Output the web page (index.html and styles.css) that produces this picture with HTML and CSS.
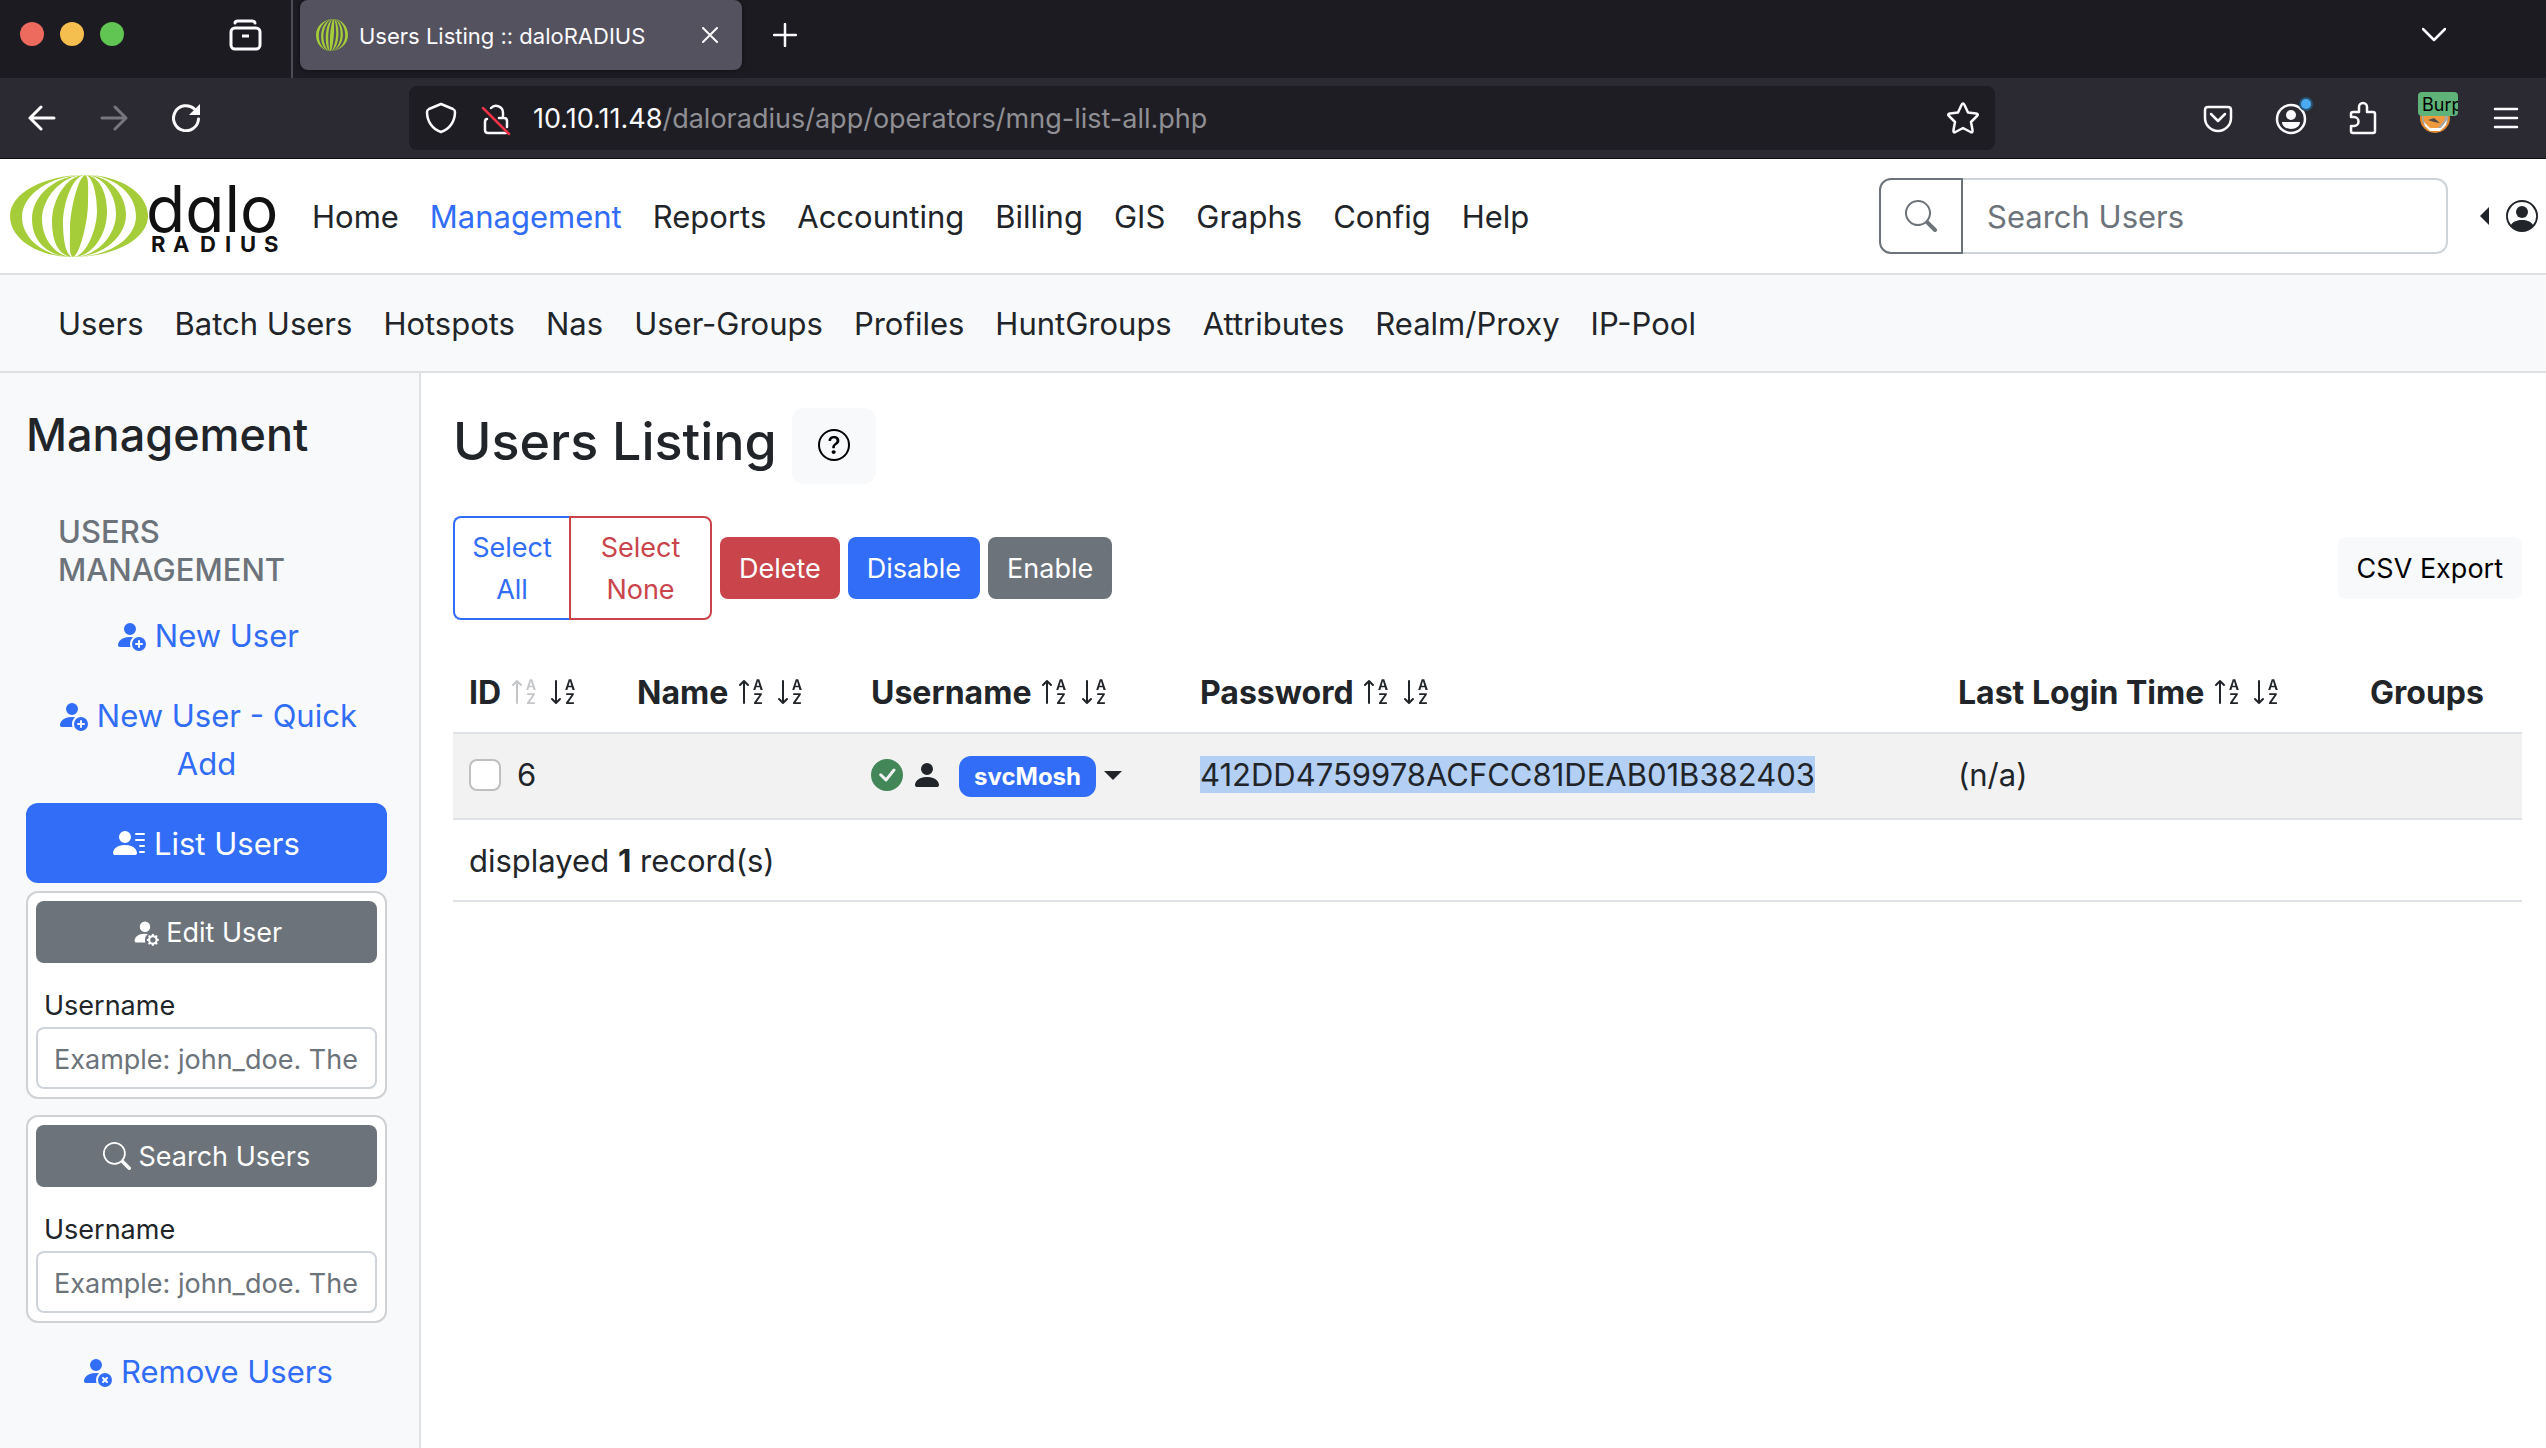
FILE: index.html
```html
<!DOCTYPE html>
<html lang="en">
<head>
<meta charset="utf-8">
<title>Users Listing :: daloRADIUS</title>
<link rel="stylesheet" href="styles.css">
</head>
<body>
<svg class="sprite" aria-hidden="true">
  <symbol id="globe" viewBox="0 0 138 82" preserveAspectRatio="none">
    <g fill="#a5cd39">
      <path d="M75 0C34 0 0 18 0 41S28 82 63 82C35 82 12 64 12 42S40 0 75 0z"/>
      <path d="M75 0C46 0 22 20 22 44S40 82 63 82C46 82 32 64 32 44S51 0 75 0z"/>
      <path d="M75 0C57 0 42 24 42 47S51 82 63 82C57 82 53 68 53 48S63 0 75 0z"/>
      <path d="M75 0C68 2 60 36 60 54S59 80 63 82C70 80 78 46 78 28S79 2 75 0z"/>
      <path d="M75 0C82 0 87 18 87 36S76 82 63 82C82 82 97 60 97 37S87 0 75 0z"/>
      <path d="M75 0C92 0 106 18 106 39S87 82 63 82C92 82 116 62 116 40S98 0 75 0z"/>
      <path d="M75 0C103 0 126 18 126 41S98 82 63 82C104 82 138 64 138 41S110 0 75 0z"/>
    </g>
  </symbol>
  <symbol id="sort-up" viewBox="0 0 16 16">
    <path fill-rule="evenodd" d="M10.082 5.629 9.664 7H8.598l1.789-5.332h1.234L13.402 7h-1.12l-.419-1.371zm1.57-.785L11 2.687h-.047l-.652 2.157z"/>
    <path d="M12.96 14H9.028v-.691l2.579-3.72v-.054H9.098v-.867h3.785v.691l-2.567 3.72v.054h2.645zm-8.46-.5a.5.5 0 0 1-1 0V3.707L2.354 4.854a.5.5 0 1 1-.708-.708l2-1.999.007-.007a.5.5 0 0 1 .7.006l2 2a.5.5 0 1 1-.707.708L4.5 3.707z"/>
  </symbol>
  <symbol id="sort-down" viewBox="0 0 16 16">
    <path fill-rule="evenodd" d="M10.082 5.629 9.664 7H8.598l1.789-5.332h1.234L13.402 7h-1.12l-.419-1.371zm1.57-.785L11 2.687h-.047l-.652 2.157z"/>
    <path d="M12.96 14H9.028v-.691l2.579-3.72v-.054H9.098v-.867h3.785v.691l-2.567 3.72v.054h2.645zM4.5 2.5a.5.5 0 0 0-1 0v9.793l-1.146-1.147a.5.5 0 0 0-.708.708l2 1.999.007.007a.497.497 0 0 0 .7-.006l2-2a.5.5 0 0 0-.707-.708L4.5 12.293z"/>
  </symbol>
  <symbol id="person-add" viewBox="0 0 16 16">
    <path d="M12.5 16a3.5 3.5 0 1 0 0-7 3.5 3.5 0 0 0 0 7m.5-5v1h1a.5.5 0 0 1 0 1h-1v1a.5.5 0 0 1-1 0v-1h-1a.5.5 0 0 1 0-1h1v-1a.5.5 0 0 1 1 0m-2-6a3 3 0 1 1-6 0 3 3 0 0 1 6 0"/>
    <path d="M2 13c0 1 1 1 1 1h5.256A4.5 4.5 0 0 1 8 12.5a4.5 4.5 0 0 1 1.544-3.393Q8.844 9.002 8 9c-5 0-6 3-6 4"/>
  </symbol>
  <symbol id="person-x" viewBox="0 0 16 16">
    <path d="M11 5a3 3 0 1 1-6 0 3 3 0 0 1 6 0m-9 8c0 1 1 1 1 1h5.256A4.5 4.5 0 0 1 8 12.5a4.5 4.5 0 0 1 1.544-3.393Q8.844 9.002 8 9c-5 0-6 3-6 4"/>
    <path d="M12.5 16a3.5 3.5 0 1 0 0-7 3.5 3.5 0 0 0 0 7m-.646-4.854.646.647.646-.647a.5.5 0 0 1 .708.708l-.647.646.647.646a.5.5 0 0 1-.708.708l-.646-.647-.646.647a.5.5 0 0 1-.708-.708l.647-.646-.647-.646a.5.5 0 0 1 .708-.708"/>
  </symbol>
  <symbol id="person-gear" viewBox="0 0 16 16">
    <path d="M11 5a3 3 0 1 1-6 0 3 3 0 0 1 6 0m-9 8c0 1 1 1 1 1h5.256A4.5 4.5 0 0 1 8 12.5a4.5 4.5 0 0 1 1.544-3.393Q8.844 9.002 8 9c-5 0-6 3-6 4m9.886-3.54c.18-.613 1.048-.613 1.229 0l.043.148a.64.64 0 0 0 .921.382l.136-.074c.561-.306 1.175.308.87.869l-.075.136a.64.64 0 0 0 .382.92l.149.045c.612.18.612 1.048 0 1.229l-.15.043a.64.64 0 0 0-.38.921l.074.136c.305.561-.309 1.175-.87.87l-.136-.075a.64.64 0 0 0-.92.382l-.045.149c-.18.612-1.048.612-1.229 0l-.043-.15a.64.64 0 0 0-.921-.38l-.136.074c-.561.305-1.175-.309-.87-.87l.075-.136a.64.64 0 0 0-.382-.92l-.148-.045c-.613-.18-.613-1.048 0-1.229l.148-.043a.64.64 0 0 0 .382-.921l-.074-.136c-.306-.561.308-1.175.869-.87l.136.075a.64.64 0 0 0 .92-.382zM14 12.5a1.5 1.5 0 1 0-3 0 1.5 1.5 0 0 0 3 0"/>
  </symbol>
  <symbol id="person-lines" viewBox="0 0 16 16">
    <path d="M6 8a3 3 0 1 0 0-6 3 3 0 0 0 0 6m-5 6s-1 0-1-1 1-4 6-4 6 3 6 4-1 1-1 1zM11 3.5a.5.5 0 0 1 .5-.5h4a.5.5 0 0 1 0 1h-4a.5.5 0 0 1-.5-.5m.5 2.5a.5.5 0 0 0 0 1h4a.5.5 0 0 0 0-1zm2 3a.5.5 0 0 0 0 1h2a.5.5 0 0 0 0-1zm0 3a.5.5 0 0 0 0 1h2a.5.5 0 0 0 0-1z"/>
  </symbol>
  <symbol id="search" viewBox="0 0 16 16">
    <path d="M11.742 10.344a6.5 6.5 0 1 0-1.397 1.398h-.001q.044.06.098.115l3.85 3.85a1 1 0 0 0 1.415-1.414l-3.85-3.85a1 1 0 0 0-.115-.1zM12 6.5a5.5 5.5 0 1 1-11 0 5.5 5.5 0 0 1 11 0"/>
  </symbol>
  <symbol id="person-circle" viewBox="0 0 16 16">
    <path d="M11 6a3 3 0 1 1-6 0 3 3 0 0 1 6 0"/>
    <path fill-rule="evenodd" d="M0 8a8 8 0 1 1 16 0A8 8 0 0 1 0 8m8-7a7 7 0 0 0-5.468 11.37C3.242 11.226 4.805 10 8 10s4.757 1.225 5.468 2.37A7 7 0 0 0 8 1"/>
  </symbol>
  <symbol id="question" viewBox="0 0 16 16">
    <path d="M8 15A7 7 0 1 1 8 1a7 7 0 0 1 0 14m0 1A8 8 0 1 0 8 0a8 8 0 0 0 0 16"/>
    <path d="M5.255 5.786a.237.237 0 0 0 .241.247h.825c.138 0 .248-.113.266-.25.09-.656.54-1.134 1.342-1.134.686 0 1.314.343 1.314 1.168 0 .635-.374.927-.965 1.371-.673.489-1.206 1.06-1.168 1.987l.003.217a.25.25 0 0 0 .25.246h.811a.25.25 0 0 0 .25-.25v-.105c0-.718.273-.927 1.01-1.486.609-.463 1.244-.977 1.244-2.056 0-1.511-1.276-2.241-2.673-2.241-1.267 0-2.655.59-2.75 2.286m1.557 5.763c0 .533.425.927 1.01.927.609 0 1.028-.394 1.028-.927 0-.552-.42-.94-1.029-.94-.584 0-1.009.388-1.009.94"/>
  </symbol>
  <symbol id="check-circle" viewBox="0 0 16 16">
    <path d="M16 8A8 8 0 1 1 0 8a8 8 0 0 1 16 0m-3.97-3.03a.75.75 0 0 0-1.08.022L7.477 9.417 5.384 7.323a.75.75 0 0 0-1.06 1.06L6.97 11.03a.75.75 0 0 0 1.079-.02l3.992-4.99a.75.75 0 0 0-.01-1.05z"/>
  </symbol>
  <symbol id="person" viewBox="0 0 16 16">
    <path d="M3 14s-1 0-1-1 1-4 6-4 6 3 6 4-1 1-1 1zm5-6a3 3 0 1 0 0-6 3 3 0 0 0 0 6"/>
  </symbol>
</svg>

<div class="browser">
  <div class="tabstrip">
    <div class="lights"><span class="light red"></span><span class="light yellow"></span><span class="light green"></span></div>
    <button class="chrome-btn recent" aria-label="Recent tabs">
      <svg class="icon" viewBox="0 0 32 32" fill="none" stroke="#fbfbfe" stroke-width="3" stroke-linecap="round" stroke-linejoin="round"><path d="M6 4q0-2 3-2h14q3 0 3 2"/><rect x="2" y="9" width="29" height="21" rx="4"/><path d="M13 17h7" stroke-linecap="butt"/></svg>
    </button>
    <div class="tab">
      <svg class="favicon"><use href="#globe"/></svg>
      <span class="tab-title">Users Listing :: daloRADIUS</span>
      <button class="chrome-btn" aria-label="Close tab"><svg class="close" viewBox="0 0 16 16" stroke="#fbfbfe" stroke-width="2" stroke-linecap="round"><path d="M1 1l14 14M15 1L1 15"/></svg></button>
    </div>
    <button class="chrome-btn newtab" aria-label="New tab"><svg class="plus" viewBox="0 0 24 24" stroke="#fbfbfe" stroke-width="2.500" stroke-linecap="round"><path d="M12 1v22M1 12h22"/></svg></button>
    <button class="chrome-btn alltabs" aria-label="List all tabs"><svg class="plus" viewBox="0 0 24 24" fill="none" stroke="#fbfbfe" stroke-width="2.500" stroke-linecap="round" stroke-linejoin="round"><path d="M1 6l11 11L23 6"/></svg></button>
  </div>
  <div class="toolbar">
    <div class="nav-buttons">
      <button class="chrome-btn" aria-label="Back"><svg class="nav-icon" viewBox="0 0 28 28" fill="none" stroke="#fbfbfe" stroke-width="3" stroke-linecap="round" stroke-linejoin="round"><path d="M26 14H2M13 3L2 14l11 11"/></svg></button>
      <button class="chrome-btn" aria-label="Forward"><svg class="nav-icon" viewBox="0 0 28 28" fill="none" stroke="#77767c" stroke-width="3" stroke-linecap="round" stroke-linejoin="round"><path d="M2 14h24M15 3l11 11-11 11"/></svg></button>
      <button class="chrome-btn" aria-label="Reload"><svg class="nav-icon" viewBox="0 0 28 28" fill="none" stroke="#fbfbfe" stroke-width="3" stroke-linecap="round"><path d="M26.500 15A12.500 12.500 0 1 1 22.500 5"/><path d="M28 0v11H17z" fill="#fbfbfe" stroke="none"/></svg></button>
    </div>
    <div class="urlbar">
      <svg class="icon" viewBox="0 0 32 32" fill="none" stroke="#fbfbfe" stroke-width="2.500" stroke-linejoin="round"><path d="M16 2l12 5q2 1 2 3c0 9-5 17-14 20C7 27 2 19 2 10q0-2 2-3z"/></svg>
      <svg class="icon" viewBox="0 0 32 32" fill="none" stroke="#fbfbfe" stroke-width="2.500" stroke-linecap="round"><path d="M12 6a7 7 0 0 1 12 5v5M8 17q-2 0-2 3v8q0 3 3 3h18M20 16h5q3 0 3 3v6"/><path d="M4 6l26 26" stroke="#ee3346"/></svg>
      <span class="url"><b>10.10.11.48</b>/daloradius/app/operators/mng-list-all.php</span>
      <button class="chrome-btn" aria-label="Bookmark this page"><svg class="icon" viewBox="0 0 32 32" fill="none" stroke="#fbfbfe" stroke-width="2.500" stroke-linejoin="round"><path d="M14.500 3q1.500-3 3 0l3.500 7.500 8 1q3 .500 1 2.500l-6 6 1.500 8q.500 3-2 2L16 26l-7.500 4q-2.500 1-2-2L8 20l-6-6q-2-2 1-2.500l8-1z"/></svg></button>
    </div>
    <div class="extensions">
      <button class="chrome-btn" aria-label="Pocket"><svg class="icon" viewBox="0 0 32 32" fill="none" stroke="#fbfbfe" stroke-width="2.500" stroke-linecap="round" stroke-linejoin="round"><path d="M6 5h20q3 0 3 3v8a13 13 0 0 1-26 0V8q0-3 3-3z"/><path d="M9 12l7 7 7-7"/></svg></button>
      <button class="chrome-btn" aria-label="Account"><svg class="icon" viewBox="0 0 32 32"><circle cx="17" cy="17" r="14" fill="none" stroke="#fbfbfe" stroke-width="2.500"/><circle cx="17" cy="13" r="5" fill="#fbfbfe"/><path d="M8 20h18c0 4-4 7-9 7s-9-3-9-7z" fill="#fbfbfe"/><circle cx="32" cy="2" r="7" fill="#285373"/><circle cx="32" cy="2" r="5" fill="#4aabf2"/></svg></button>
      <button class="chrome-btn" aria-label="Extensions"><svg class="icon" viewBox="0 0 32 32" fill="none" stroke="#fbfbfe" stroke-width="2.500" stroke-linejoin="round"><path d="M13 10V5a4 4 0 0 1 8 0v5h6q2 0 2 2v17q0 2-2 2H7q-2 0-2-2v-5h3a4 4 0 0 0 0-9H5v-3q0-2 2-2z"/></svg></button>
      <button class="chrome-btn" aria-label="Proxy: Burp"><svg class="icon" viewBox="0 0 32 32"><circle cx="17" cy="16" r="14" fill="#a9a7a4" stroke="#e58a2c" stroke-width="2"/><path d="M5 8h24l-3 11-8 9h-6L6 19z" fill="#ef9a3f"/><path d="M6 20l6 6h11l6-8-1 5-6 6H12l-5-5z" fill="#fff"/><path d="M10 18l6-2 6 5-6-1z" fill="#4f4a48"/></svg><span class="proxy-tag">Burp</span></button>
      <button class="chrome-btn" aria-label="Menu"><svg class="icon" viewBox="0 0 32 32" stroke="#fbfbfe" stroke-width="2.500" stroke-linecap="round"><path d="M5 7h22M5 16h22M5 25h22"/></svg></button>
    </div>
  </div>
</div>

<header class="navbar">
  <a class="brand" href="#" aria-label="daloRADIUS">
    <svg class="logo" viewBox="0 0 270 82"><use href="#globe" width="138" height="82"/><text class="logo-dalo" x="136" y="57">dalo</text><text class="logo-radius" y="77" x="141 163 190 215 230 254">RADIUS</text></svg>
  </a>
  <nav class="menu" aria-label="Main">
    <a href="#">Home</a><a href="#" class="current">Management</a><a href="#">Reports</a><a href="#">Accounting</a><a href="#">Billing</a><a href="#">GIS</a><a href="#">Graphs</a><a href="#">Config</a><a href="#">Help</a>
  </nav>
  <form class="search" role="search">
    <button type="button" aria-label="Search"><svg class="bi"><use href="#search"/></svg></button>
    <input type="search" placeholder="Search Users" aria-label="Search Users">
  </form>
  <a class="profile" href="#" aria-label="Account menu"><span class="caret-left"></span><svg class="bi"><use href="#person-circle"/></svg></a>
</header>

<nav class="subnav" aria-label="Management">
  <a href="#">Users</a><a href="#">Batch Users</a><a href="#">Hotspots</a><a href="#">Nas</a><a href="#">User-Groups</a><a href="#">Profiles</a><a href="#">HuntGroups</a><a href="#">Attributes</a><a href="#">Realm/Proxy</a><a href="#">IP-Pool</a>
</nav>

<div class="page">
  <aside class="sidebar">
    <h2>Management</h2>
    <h3>Users Management</h3>
    <a class="side-link" href="#"><svg class="bi"><use href="#person-add"/></svg> New User</a>
    <a class="side-link" href="#"><svg class="bi"><use href="#person-add"/></svg> New User - Quick Add</a>
    <a class="side-link active" href="#"><svg class="bi"><use href="#person-lines"/></svg> List Users</a>
    <form class="card">
      <button type="button"><svg class="bi"><use href="#person-gear"/></svg> Edit User</button>
      <label for="edit-username">Username</label>
      <input id="edit-username" type="text" placeholder="Example: john_doe. The username">
    </form>
    <form class="card">
      <button type="button"><svg class="bi"><use href="#search"/></svg> Search Users</button>
      <label for="search-username">Username</label>
      <input id="search-username" type="text" placeholder="Example: john_doe. The username">
    </form>
    <a class="side-link" href="#"><svg class="bi"><use href="#person-x"/></svg> Remove Users</a>
  </aside>

  <main class="content">
    <div class="title-row">
      <h1>Users Listing</h1>
      <button class="help" aria-label="Help"><svg class="bi"><use href="#question"/></svg></button>
    </div>
    <div class="actions">
      <div class="group"><button class="outline-blue">Select<br>All</button><button class="outline-red">Select<br>None</button></div>
      <button class="btn red-bg">Delete</button>
      <button class="btn blue-bg">Disable</button>
      <button class="btn gray-bg">Enable</button>
      <button class="btn export">CSV Export</button>
    </div>
    <table>
      <colgroup><col class="c-id"><col class="c-name"><col class="c-user"><col class="c-pass"><col class="c-login"><col class="c-groups"></colgroup>
      <thead>
        <tr>
          <th>ID <a href="#" class="muted" aria-label="Ascending"><svg class="bi"><use href="#sort-up"/></svg></a> <a href="#" aria-label="Descending"><svg class="bi"><use href="#sort-down"/></svg></a></th>
          <th>Name <a href="#" aria-label="Ascending"><svg class="bi"><use href="#sort-up"/></svg></a> <a href="#" aria-label="Descending"><svg class="bi"><use href="#sort-down"/></svg></a></th>
          <th>Username <a href="#" aria-label="Ascending"><svg class="bi"><use href="#sort-up"/></svg></a> <a href="#" aria-label="Descending"><svg class="bi"><use href="#sort-down"/></svg></a></th>
          <th>Password <a href="#" aria-label="Ascending"><svg class="bi"><use href="#sort-up"/></svg></a> <a href="#" aria-label="Descending"><svg class="bi"><use href="#sort-down"/></svg></a></th>
          <th>Last Login Time <a href="#" aria-label="Ascending"><svg class="bi"><use href="#sort-up"/></svg></a> <a href="#" aria-label="Descending"><svg class="bi"><use href="#sort-down"/></svg></a></th>
          <th>Groups</th>
        </tr>
      </thead>
      <tbody>
        <tr>
          <td><label class="check"><input type="checkbox">6</label></td>
          <td></td>
          <td><div class="user"><svg class="bi ok"><use href="#check-circle"/></svg><svg class="bi"><use href="#person"/></svg><button class="user-menu"><span class="badge">svcMosh</span><span class="caret-down"></span></button></div></td>
          <td><mark>412DD4759978ACFCC81DEAB01B382403</mark></td>
          <td>(n/a)</td>
          <td></td>
        </tr>
      </tbody>
      <tfoot><tr><td colspan="6">displayed <b>1</b> record(s)</td></tr></tfoot>
    </table>
  </main>
</div>
</body>
</html>
```
FILE: styles.css
```css
:root {
  --ink: #212529;
  --blue: #316df6;
  --red: #c9444b;
  --gray: #6c737a;
  --soft: #f8f9fb;
  --line: #dee0e3;
  --fs: 31px;
  --fs-sm: 27px;
}
* { box-sizing: border-box; }
body {
  margin: 0;
  min-height: 100vh;
  display: flex;
  flex-direction: column;
  font: 400 var(--fs)/48px Inter, "Liberation Sans", sans-serif;
  color: var(--ink);
  background: #fff;
}
a { color: inherit; text-decoration: none; }
button, input { font: inherit; margin: 0; }
button { cursor: pointer; }
.sprite { display: none; }
.bi { width: 32px; height: 32px; fill: currentColor; vertical-align: -4px; }

/* Browser frame */
.browser { background: #2b2a33; border-bottom: 1px solid #0c0c0d; }
.chrome-btn { display: flex; align-items: center; padding: 0; border: 0; background: none; position: relative; }
.icon { display: block; width: 32px; height: 32px; overflow: visible; }
.tabstrip { display: flex; height: 78px; background: #1c1b22; padding-right: 100px; }
.lights { display: flex; gap: 16px; padding: 22px 0 0 20px; width: 229px; }
.light { width: 24px; height: 24px; border-radius: 50%; }
.red { background: #ed6a5e; }
.yellow { background: #f5bf4f; }
.green { background: #61c554; }
.recent { width: 64px; padding-bottom: 8px; border-right: 2px solid #4d4c54; }
.tab {
  display: flex; align-items: center; gap: 11px;
  width: 442px; height: 70px; margin-left: 7px; padding: 0 24px 0 16px;
  border-radius: 8px; background: #54525e;
  color: #fbfbfe; font-size: 22px;
  box-shadow: 0 0 4px #0008;
}
.favicon { width: 32px; height: 32px; }
.tab-title { flex: 1; padding-top: 2px; white-space: nowrap; }
.close { width: 16px; height: 16px; display: block; }
.plus { width: 24px; height: 24px; display: block; }
.newtab { margin-left: 31px; padding-bottom: 8px; }
.alltabs { margin-left: auto; padding-bottom: 8px; }
.toolbar { display: flex; align-items: center; height: 80px; padding: 0 24px 0 28px; }
.nav-buttons { display: flex; gap: 44px; width: 381px; }
.nav-icon { width: 28px; height: 28px; display: block; }
.urlbar {
  display: flex; align-items: center; gap: 22px;
  flex: 0 1 1586px; height: 64px; padding: 0 16px;
  border-radius: 8px; background: #1e1d23; color: #8f8f94;
}
.url { flex: 1; padding-top: 2px; font-size: var(--fs-sm); white-space: nowrap; }
.url b { font-weight: 400; color: #fbfbfe; }
.extensions { display: flex; align-items: center; gap: 40px; margin-left: auto; }
.proxy-tag {
  position: absolute; left: 0; top: -10px; width: 40px; height: 24px; overflow: hidden;
  border-radius: 4px; background: #5fb278; color: #000;
  font-size: 18px; line-height: 26px; text-align: left; padding-left: 4px;
}

/* Site header */
.navbar { display: flex; align-items: center; height: 116px; padding: 0 8px 0 10px; border-bottom: 2px solid var(--line); }
.brand { display: block; height: 82px; }
.logo { width: 270px; height: 82px; display: block; overflow: visible; }
.logo-dalo { font-size: 64px; font-feature-settings: "cv11"; fill: #111; }
.logo-radius { font-size: 22px; font-weight: 700; fill: #111; }
.menu { display: flex; gap: 31px; margin-left: 32px; padding-top: 2px; }
.current { color: var(--blue); }
.search { display: flex; width: 569px; height: 76px; margin-left: auto; }
.search button { width: 84px; padding: 0; border: 2px solid var(--gray); border-radius: 12px 0 0 12px; background: #fff; color: var(--gray); }
.search .bi { display: block; margin: 0 auto; }
.search input {
  flex: 1; min-width: 0; padding: 2px 24px 0; border: 2px solid #ced4da; border-left: 0;
  border-radius: 0 12px 12px 0; background: #fff; outline: 0;
}
input::placeholder { color: var(--gray); opacity: 1; }
.profile { display: flex; align-items: center; gap: 17px; margin-left: 32px; }
.caret-left { border: 9px solid transparent; border-right-color: var(--ink); border-left: 0; }
.subnav { display: flex; align-items: center; gap: 31px; height: 98px; padding: 2px 58px 0; background: var(--soft); border-bottom: 2px solid var(--line); }

/* Sidebar */
.page { display: flex; flex: 1; }
.sidebar { flex: 0 0 421px; padding: 32px 32px 16px 26px; background: var(--soft); border-right: 2px solid var(--line); }
.sidebar h2 { margin: 0; font-size: 45px; line-height: 60px; font-weight: 500; }
.sidebar h3 { margin: 48px 32px 6px; font-size: var(--fs); line-height: 38px; font-weight: 500; text-transform: uppercase; color: var(--gray); }
.side-link { display: block; padding: 17px 24px 15px; border-radius: 12px; text-align: center; color: var(--blue); }
.active { background: var(--blue); color: #fff; }
.card {
  display: flex; flex-direction: column; margin: 8px 0 16px; padding: 8px;
  border: 2px solid #d0d1d3; border-radius: 12px; background: #fff;
  font-size: var(--fs-sm); line-height: 42px;
}
.card + .card { margin-bottom: 8px; }
.card button { height: 62px; padding: 2px 0 0; border: 0; border-radius: 8px; background: var(--gray); color: #fff; }
.card .bi { width: 28px; height: 28px; }
.card label { padding: 22px 8px 0; }
.card input { width: 100%; height: 62px; padding: 2px 16px 0; border: 2px solid #ced4da; border-radius: 8px; outline: 0; }

/* Listing */
.content { flex: 1; min-width: 0; padding: 32px 24px 0 32px; }
.title-row { display: flex; align-items: center; gap: 15px; height: 82px; }
h1 { margin: 0; padding-bottom: 8px; font-size: 52px; line-height: 66px; font-weight: 500; }
.help { width: 84px; height: 76px; padding: 0; border: 0; border-radius: 12px; background: var(--soft); color: #000; }
.actions { display: flex; align-items: center; gap: 8px; margin-top: 29px; font-size: var(--fs-sm); line-height: 42px; }
.group { display: flex; }
.group button { height: 104px; padding: 2px 16px 0; background: #fff; }
.outline-blue { width: 116px; border: 2px solid var(--blue); border-right: 0; border-radius: 8px 0 0 8px; color: var(--blue); }
.outline-red { width: 143px; border: 2px solid var(--red); border-radius: 0 8px 8px 0; color: var(--red); }
.btn { height: 62px; padding: 2px 19px 0; border: 0; border-radius: 8px; color: #fff; }
.red-bg { background: var(--red); }
.blue-bg { background: var(--blue); }
.gray-bg { background: var(--gray); }
.export { margin-left: auto; background: var(--soft); color: #000; }
table { width: 100%; margin-top: 32px; border-collapse: collapse; table-layout: fixed; }
.c-id { width: 168px; }
.c-name { width: 234px; }
.c-user { width: 329px; }
.c-groups { width: 168px; }
.c-login { width: 412px; }
th, td { padding: 17px 16px 15px; text-align: left; border-bottom: 2px solid #dee2e6; white-space: nowrap; }
th { font-size: 32px; font-weight: 700; }
.muted { color: #c5c6c8; }
tbody td { height: 86px; padding: 15px 16px 17px; background: #f2f2f2; }
.check { display: flex; align-items: center; gap: 16px; }
.check input { appearance: none; width: 32px; height: 32px; border: 2px solid #bfbfbf; border-radius: 8px; background: #fff; }
.user { display: flex; align-items: center; gap: 8px; }
.ok { color: #438759; }
.user-menu { display: flex; align-items: center; gap: 8px; padding: 0 0 0 8px; border: 0; background: none; }
.badge { margin-top: 3px; padding: 1px 15px 0; border-radius: 12px; background: var(--blue); color: #fff; font-size: 24px; line-height: 40px; font-weight: 700; }
.caret-down { border: 9px solid transparent; border-top-color: var(--ink); border-bottom: 0; }
mark { background: #b4cff4; color: inherit; }
```
